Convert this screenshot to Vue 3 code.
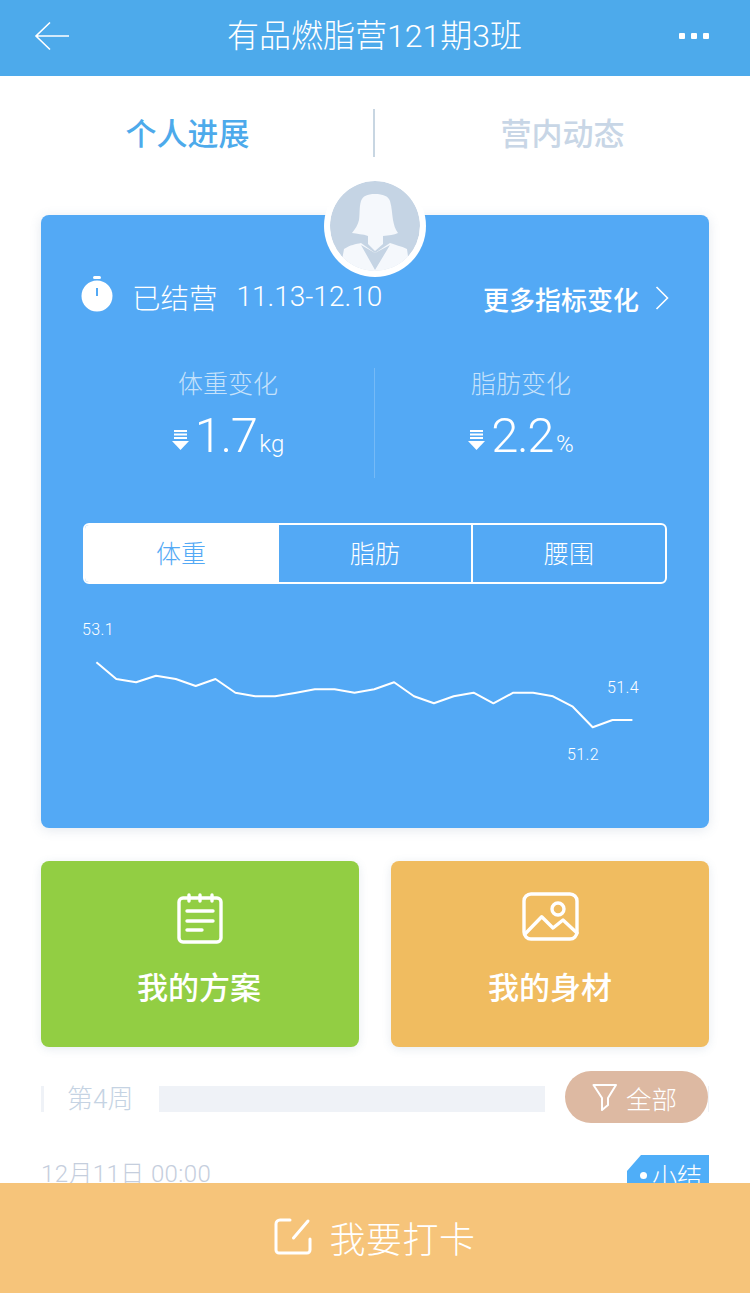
<script setup>
const ys = [662.3,679,682.3,675.7,679,686,679,692.7,696.3,696.3,693,689.3,689.3,692.7,689.3,682.3,696.3,703.3,696.3,692.7,703.3,692.7,692.7,696.3,706.7,727.3,720,720]
const CHART_TOP = 610
const points = ys.map((y, i) => `${(96.4 + i * 19.85 - 41).toFixed(1)},${(y - CHART_TOP).toFixed(1)}`).join(' ')
const stats = [
  { label: '体重变化', value: '1.7', unit: 'kg' },
  { label: '脂肪变化', value: '2.2', unit: '%' }
]
</script>

<template>
  <div class="page">
    <header class="nav">
      <svg class="back" width="36" height="30" viewBox="0 0 36 30" fill="none" stroke="#fff" stroke-width="1.6">
        <path d="M35 15H2M16 1.5 2 15l14 13.5" />
      </svg>
      <h1 class="title">有品燃脂营121期3班</h1>
      <div class="dots"><i></i><i></i><i></i></div>
    </header>

    <nav class="tabs">
      <div class="tab active">个人进展</div>
      <div class="tab-sep"></div>
      <div class="tab">营内动态</div>
    </nav>

    <section class="card">
      <div class="avatar">
        <svg width="90" height="90" viewBox="0 0 90 90">
          <circle cx="45" cy="45" r="45" fill="#C5D4E4" />
          <path d="M14 68C20 64 26 63 31 62L45 72 60 62C65 64 71 65 77 68L80 90H10Z" fill="#F5F8FC" />
          <path d="M45 13C37 13 33 15 31 20 29 27 30 33 29 39 28 44 25 48 22 52 27 53 33 53 38 55V63L45 70 53 63V55C59 54 64 54 68 52 65 48 64 44 63 39 62 33 62 27 60 20 58 15 53 13 45 13Z" fill="#F5F8FC" />
          <path d="M31 64 45 89 60 64 45 72Z" fill="#C5D4E4" />
        </svg>
      </div>

      <div class="meta">
        <div class="status">
          <svg class="clock" width="32" height="36" viewBox="0 0 32 36">
            <rect x="12" y="0" width="8" height="3" rx="1.5" fill="#fff" />
            <circle cx="16" cy="20" r="15.5" fill="#fff" />
            <rect x="15" y="12" width="2" height="8" fill="#53A9F5" />
          </svg>
          <span class="status-text">已结营</span>
          <span class="dates">11.13-12.10</span>
        </div>
        <div class="more">
          <span>更多指标变化</span>
          <svg width="14" height="24" viewBox="0 0 14 24" fill="none" stroke="#fff" stroke-width="1.6"><path d="M1.5 1 12.5 12 1.5 23" /></svg>
        </div>
      </div>

      <div class="stats">
        <div v-for="s in stats" :key="s.label" class="stat">
          <div class="stat-label">{{ s.label }}</div>
          <div class="stat-value">
            <svg class="down" width="17" height="20" viewBox="0 0 17 20" fill="#fff">
              <rect x="2" y="0" width="13" height="2" />
              <rect x="2" y="3.5" width="13" height="2" />
              <rect x="2" y="7" width="13" height="2" />
              <path d="M0 11h17l-8.5 9Z" />
            </svg>
            <span class="num">{{ s.value }}</span>
            <span class="unit">{{ s.unit }}</span>
          </div>
        </div>
      </div>

      <div class="seg">
        <div class="seg-item on">体重</div>
        <div class="seg-item">脂肪</div>
        <div class="seg-item">腰围</div>
      </div>

      <div class="chart">
        <svg width="668" height="170" viewBox="0 0 668 170" fill="none">
          <polyline :points="points" stroke="#fff" stroke-width="2" stroke-linejoin="round" />
        </svg>
        <span class="pt" style="left: 41px; top: 10px">53.1</span>
        <span class="pt" style="left: 566px; top: 68px">51.4</span>
        <span class="pt" style="left: 526px; top: 135px">51.2</span>
      </div>
    </section>

    <section class="actions">
      <div class="action green">
        <svg width="46" height="52" viewBox="0 0 46 52" fill="none" stroke="#fff" stroke-width="3.4" stroke-linecap="round">
          <rect x="2" y="6" width="42" height="44" rx="4" />
          <path d="M12 3v6M23 3v6M35 3v6" />
          <path d="M10 19h26M10 29h26M10 38h15" />
        </svg>
        <span>我的方案</span>
      </div>
      <div class="action amber">
        <svg width="57" height="49" viewBox="0 0 57 49" fill="none" stroke="#fff" stroke-width="3.4" stroke-linecap="round" stroke-linejoin="round">
          <rect x="2" y="2" width="53" height="45" rx="7" />
          <circle cx="36" cy="17" r="6" />
          <path d="M3 42 19.7 24.7 31 36l10-8 14 13" />
        </svg>
        <span>我的身材</span>
      </div>
    </section>

    <section class="week">
      <div class="week-bar"></div>
      <span class="week-label">第4周</span>
      <div class="week-fill"></div>
      <div class="filter">
        <svg width="26" height="28" viewBox="0 0 26 28" fill="none" stroke="#fff" stroke-width="2" stroke-linejoin="round">
          <path d="M1.5 2H24L16 15v7l-6 5V15Z" />
        </svg>
        <span>全部</span>
      </div>
      <div class="week-end"></div>
    </section>

    <section class="entry">
      <span class="date">12月11日 00:00</span>
      <span class="tag"><i></i>小结</span>
    </section>

    <footer class="cta">
      <svg width="38" height="38" viewBox="0 0 38 38" fill="none" stroke="#fff" stroke-width="3" stroke-linecap="round">
        <path d="M16 2H6a4 4 0 0 0-4 4v26a3 3 0 0 0 3 3h28a3 3 0 0 0 3-3V21" />
        <path d="M34 3 19.5 20" />
      </svg>
      <span>我要打卡</span>
    </footer>
  </div>
</template>

<style>
html, body { margin: 0; background: #fff; }
</style>

<style scoped>
.page {
  position: relative;
  width: 750px;
  height: 1293px;
  overflow: hidden;
  background: #fff;
  font-family: "Roboto", "Noto Sans CJK SC", sans-serif;
  font-weight: 300;
  color: #fff;
}
.nav {
  height: 76px;
  background: #4DAAEB;
  display: flex;
  align-items: center;
  justify-content: space-between;
  padding: 0 41px 4px 34px;
  box-sizing: border-box;
}
.back { display: block; }
.title {
  margin: 0;
  font-size: 32px;
  font-weight: 300;
  line-height: 40px;
}
.dots { display: flex; gap: 6px; }
.dots i { width: 6px; height: 6px; background: #fff; border-radius: 1px; display: block; }

.tabs {
  height: 139px;
  display: flex;
  align-items: flex-start;
  padding-top: 33px;
  box-sizing: border-box;
}
.tab {
  flex: 1;
  text-align: center;
  font-size: 31px;
  line-height: 48px;
  padding-top: 2px;
  font-weight: 500;
  color: #C8D6E6;
}
.tab.active { color: #4DAAEB; }
.tab-sep { width: 2px; height: 48px; background: #C8D6E2; margin-left: -2px; }

.card {
  position: relative;
  margin: 0 41px;
  height: 613px;
  background: #53A9F5;
  border-radius: 8px;
  box-shadow: 0 2px 12px rgba(80, 110, 150, 0.16);
}
.avatar {
  position: absolute;
  left: 283px;
  top: -40px;
  width: 102px;
  height: 102px;
  border-radius: 50%;
  background: #fff;
  display: flex;
  align-items: center;
  justify-content: center;
}
.avatar svg { border-radius: 50%; }

.meta {
  display: flex;
  justify-content: space-between;
  align-items: center;
  padding: 60px 40px 0 40px;
  height: 50px;
}
.status { display: flex; align-items: center; margin-bottom: 8px; }
.clock { display: block; margin-top: -4px; }
.status-text { font-size: 28.5px; margin-left: 19px; }
.dates { font-size: 28px; margin-left: 19px; }
.more { display: flex; align-items: center; gap: 16px; font-size: 26px; font-weight: 500; margin-bottom: 4px; }

.stats {
  display: flex;
  height: 110px;
  margin-top: 43px;
}
.stat { flex: 1; text-align: center; box-sizing: border-box; }
.stat:first-child { flex: 0 0 334px; border-right: 1px solid rgba(255, 255, 255, 0.2); padding-left: 41px; }
.stat:last-child { padding-right: 42px; }
.stat-label { font-size: 25px; line-height: 34px; color: #C6E2FB; }
.stat-value { display: flex; justify-content: center; align-items: baseline; height: 58px; margin-top: 5px; }
.down { align-self: center; margin-right: 6px; margin-top: 8px; }
.num { font-size: 49px; line-height: 58px; letter-spacing: -1.5px; }
.unit { font-size: 24px; margin-left: 3px; }

.seg {
  display: flex;
  margin: 45px 42px 0 42px;
  height: 61px;
  border: 2px solid #fff;
  border-radius: 6px;
  box-sizing: border-box;
  overflow: hidden;
}
.seg-item {
  flex: 1;
  display: flex;
  align-items: center;
  justify-content: center;
  font-size: 25px;
  padding-bottom: 3px;
}
.seg-item + .seg-item { border-left: 2px solid #fff; }
.seg-item.on { background: #fff; color: #53A9F5; flex: 0 0 194px; padding-right: 2px; box-sizing: border-box; }
.seg-item.on + .seg-item { border-left: 0; }

.chart { position: relative; height: 170px; margin-top: 26px; }
.chart svg { display: block; }
.pt { position: absolute; font-size: 16px; line-height: 20px; letter-spacing: 0.4px; }

.actions {
  display: flex;
  justify-content: space-between;
  margin: 33px 41px 0;
}
.action {
  width: 318px;
  height: 186px;
  border-radius: 8px;
  display: flex;
  flex-direction: column;
  align-items: center;
  box-shadow: 0 2px 10px rgba(80, 110, 150, 0.14);
  font-size: 31px;
  font-weight: 500;
}
.action svg { margin-top: 31px; display: block; }
.action span { line-height: 40px; }
.green { background: #92CE43; }
.green span { margin-top: 25px; margin-right: 2px; }
.amber { background: #F0BC60; }
.amber span { margin-top: 28px; }

.week {
  display: flex;
  align-items: flex-start;
  margin: 24px 41px 0;
  height: 52px;
}
.week-bar, .week-fill, .week-end { height: 26px; background: #EFF2F7; margin-top: 15px; }
.week-bar { width: 3px; }
.week-label { margin-left: 23px; width: 92px; font-size: 26px; line-height: 52px; margin-top: 2px; color: #C5D3E3; }
.week-fill { width: 386px; }
.week-end { width: 1px; }
.filter {
  margin-left: 20px;
  width: 143px;
  height: 52px;
  border-radius: 26px;
  background: #DDB9A2;
  display: flex;
  align-items: center;
  justify-content: center;
  gap: 8px;
  font-size: 25.5px;
  box-sizing: border-box;
  padding-right: 4px;
}

.entry {
  display: flex;
  justify-content: space-between;
  align-items: flex-start;
  margin: 32px 41px 0;
}
.date { font-size: 24px; line-height: 38px; color: #C5CEDD; letter-spacing: 0.4px; }
.tag {
  width: 82px;
  height: 40px;
  background: #4FAEF8;
  clip-path: polygon(14px 0, 100% 0, 100% 100%, 0 100%, 0 16px);
  display: flex;
  align-items: center;
  justify-content: flex-end;
  padding: 0 7px 0 0;
  box-sizing: border-box;
  font-size: 25px;
}
.tag i { width: 7px; height: 7px; background: #fff; border-radius: 50%; margin-right: 5px; }

.cta {
  position: absolute;
  left: 0;
  right: 0;
  bottom: 0;
  height: 110px;
  background: #F6C47A;
  display: flex;
  align-items: center;
  justify-content: center;
  gap: 17px;
  font-size: 36px;
  letter-spacing: 0.5px;
  padding-bottom: 3px;
  box-sizing: border-box;
}
</style>
